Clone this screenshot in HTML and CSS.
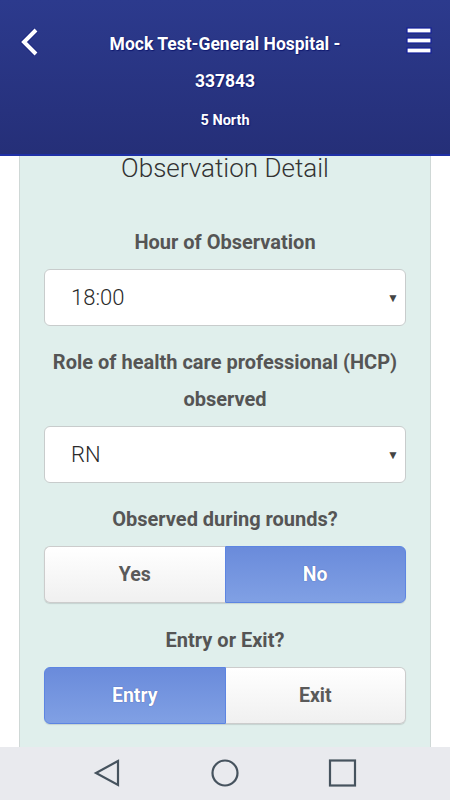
FILE: index.html
```html
<!DOCTYPE html>
<html>
<head>
<meta charset="utf-8">
<link rel="stylesheet" href="styles.css">
</head>
<body>
<div class="screen">
  <header class="topbar">
    <svg class="back" width="24" height="30" viewBox="0 0 24 30">
      <polyline points="17,3 5,15 17,27" fill="none" stroke="#1a2580" stroke-width="6" stroke-linecap="butt" stroke-linejoin="miter"/>
      <polyline points="17,3 5,15 17,27" fill="none" stroke="#ffffff" stroke-width="4" stroke-linecap="butt" stroke-linejoin="miter"/>
    </svg>
    <div class="title">
      <div class="t1">Mock Test-General Hospital -</div>
      <div class="t1">337843</div>
      <div class="t2">5 North</div>
    </div>
    <svg class="menu" width="26" height="28" viewBox="0 0 26 28">
      <rect x="1" y="1" width="24" height="5" fill="#ffffff" stroke="#14209a" stroke-width="1.2"/>
      <rect x="1" y="11" width="24" height="5" fill="#ffffff" stroke="#14209a" stroke-width="1.2"/>
      <rect x="1" y="21" width="24" height="5" fill="#ffffff" stroke="#14209a" stroke-width="1.2"/>
    </svg>
  </header>
  <main class="viewport">
    <section class="card">
      <h2 class="heading">Observation Detail</h2>
      <div class="label">Hour of Observation</div>
      <div class="select"><span>18:00</span><span class="arrow">&#9660;</span></div>
      <div class="label">Role of health care professional (HCP) observed</div>
      <div class="select"><span>RN</span><span class="arrow">&#9660;</span></div>
      <div class="label">Observed during rounds?</div>
      <div class="toggle">
        <div class="opt">Yes</div>
        <div class="opt on">No</div>
      </div>
      <div class="label">Entry or Exit?</div>
      <div class="toggle">
        <div class="opt on">Entry</div>
        <div class="opt">Exit</div>
      </div>
    </section>
  </main>
  <nav class="navbar">
    <svg width="30" height="30" viewBox="0 0 30 30"><polygon points="26,2 4,14 26,26" fill="none" stroke="#46535e" stroke-width="2.2" stroke-linejoin="miter"/></svg>
    <svg width="30" height="30" viewBox="0 0 30 30"><circle cx="15" cy="14" r="12.5" fill="none" stroke="#46535e" stroke-width="2.2"/></svg>
    <svg width="30" height="30" viewBox="0 0 30 30"><rect x="2" y="1.5" width="25" height="25" fill="none" stroke="#46535e" stroke-width="2.2"/></svg>
  </nav>
</div>
</body>
</html>
```
FILE: styles.css
```css
* { box-sizing: border-box; }
html, body { margin: 0; padding: 0; }
body {
  width: 450px;
  height: 800px;
  overflow: hidden;
  background: #ffffff;
  font-family: Roboto, "Liberation Sans", sans-serif;
}
.screen {
  display: flex;
  flex-direction: column;
  height: 800px;
}
.topbar {
  position: relative;
  z-index: 2;
  height: 156px;
  flex: none;
  background: linear-gradient(#2c3a8d, #252f78);
  border-bottom: 2px solid #1f30a6;
  display: flex;
  justify-content: center;
  padding-top: 26px;
}
.back {
  position: absolute;
  left: 19px;
  top: 27px;
}
.menu {
  position: absolute;
  left: 406px;
  top: 27px;
}
.title {
  text-align: center;
  color: #ffffff;
  font-weight: 700;
  text-shadow: 0 0 1px #101a70, 1px 1px 1px #101a70;
}
.t1 {
  font-size: 17.5px;
  line-height: 37px;
}
.t2 {
  font-size: 14.5px;
  line-height: 42px;
}
.viewport {
  flex: 1;
  overflow: hidden;
  background: #ffffff;
}
.card {
  margin: -10px 19px 0 19px;
  background: #e0efec;
  border: 1px solid #cfd8d6;
  border-top: none;
  padding: 0 24px 40px 24px;
  height: 700px;
}
.heading {
  margin: 0 0 41px 0;
  padding-top: 7px;
  font-size: 26px;
  line-height: 30px;
  font-weight: 300;
  color: #333333;
  text-align: center;
}
.label {
  font-size: 20px;
  font-weight: 700;
  color: #555555;
  line-height: 37px;
  text-align: center;
  margin-bottom: 8px;
}
.select {
  height: 57px;
  background: #ffffff;
  border: 1px solid #c8cccc;
  border-radius: 6px;
  display: flex;
  align-items: center;
  justify-content: space-between;
  padding: 0 6px 0 26px;
  font-size: 22px;
  font-weight: 300;
  color: #2a2a2a;
  margin-bottom: 18px;
}
.arrow {
  font-size: 12px;
  color: #444444;
}
.toggle {
  display: flex;
  height: 57px;
  margin-bottom: 19px;
  border-radius: 6px;
  box-shadow: 0 1px 1px rgba(0,0,0,0.12);
}
.opt {
  flex: 1;
  display: flex;
  align-items: center;
  justify-content: center;
  font-size: 19.5px;
  font-weight: 700;
  color: #5a5a5a;
  background: linear-gradient(#ffffff, #f0f0f0);
  border: 1px solid #cccccc;
}
.opt:first-child { border-radius: 6px 0 0 6px; border-right: none; }
.opt:last-child { border-radius: 0 6px 6px 0; border-left: none; }
.opt.on {
  color: #ffffff;
  background: linear-gradient(#6a8bdb, #80a0e4);
  border: 1px solid #5d85e2;
  text-shadow: 0 0 1px #2a3f90;
}
.navbar {
  height: 53px;
  flex: none;
  background: #e9eaee;
  display: flex;
  align-items: center;
  justify-content: space-between;
  padding: 0 92px 0 92px;
}
```
